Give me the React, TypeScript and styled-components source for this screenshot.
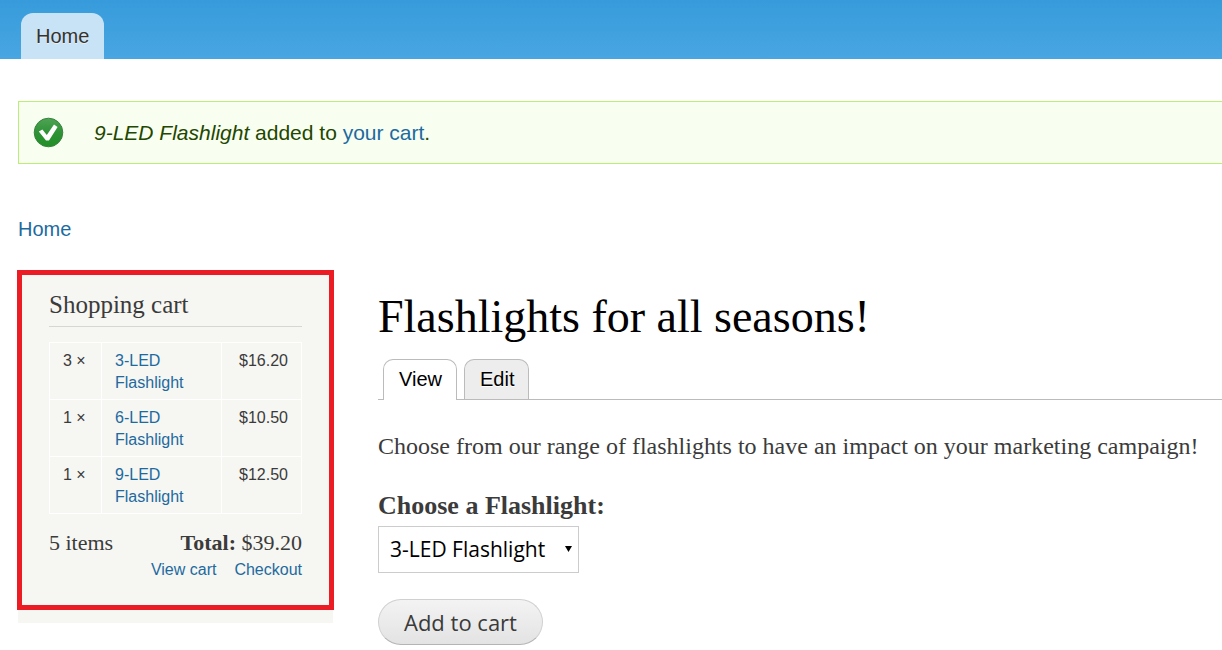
import React from "react";
import styled, { createGlobalStyle } from "styled-components";

const serif = `Georgia, "Liberation Serif", "Times New Roman", serif`;
const sans = `"Liberation Sans", Arial, Helvetica, sans-serif`;
const controls = `"Lucida Grande", "Open Sans", "Noto Sans", sans-serif`;

const GlobalStyle = createGlobalStyle`
  *, *::before, *::after { box-sizing: border-box; }
  body {
    margin: 0;
    background: #fff;
    color: #3b3b3b;
    font-family: ${serif};
    font-size: 24px;
    line-height: 32px;
  }
  h1, h2, p { margin: 0; font-weight: 400; }
`;

const Link = styled.a`
  color: #1d6a9f;
  font-family: ${sans};
  text-decoration: none;
  &:hover { text-decoration: underline; }
`;

const Header = styled.header`
  display: flex;
  align-items: flex-end;
  height: 59px;
  padding: 0 21px;
  background: linear-gradient(#379bdb, #48a6e2);
`;

const MenuTab = styled.a`
  padding: 7px 15px;
  border-radius: 12px 12px 0 0;
  background: #c7e3f5;
  color: #333;
  font: 20px/32px ${sans};
  text-shadow: 0 1px #eee;
  text-decoration: none;
`;

const Page = styled.div`
  padding: 42px 0 5px 18px;
`;

const Message = styled.div`
  display: flex;
  align-items: center;
  gap: 30px;
  min-height: 63px;
  padding: 0 14px;
  border: 1px solid #be7;
  border-right: 0;
  background: #f8fff0;
  color: #234600;
  font: 21px/32px ${sans};
`;

const Breadcrumb = styled.nav`
  padding: 49px 0 25px;
  font-size: 20px;
`;

const Columns = styled.div`
  display: flex;
  align-items: flex-start;
  gap: 45px;
`;

const Sidebar = styled.aside`
  position: relative;
  flex: 0 0 315px;
  padding: 19px 31px 40px;
  background: #f6f6f2;
`;

const Highlight = styled.div`
  position: absolute;
  inset: 0 -1px 13px;
  border: 5px solid #ec1c24;
  pointer-events: none;
`;

const BlockTitle = styled.h2`
  margin-bottom: 15px;
  padding-bottom: 5px;
  border-bottom: 1px solid #d6d6d6;
  font-size: 25px;
  line-height: 32px;
`;

const CartTable = styled.table`
  width: 100%;
  border-collapse: collapse;
  font: 16px/22px ${sans};
`;

const Cell = styled.td<{ $width?: number; $right?: boolean }>`
  width: ${(p) => (p.$width ? `${p.$width}px` : "auto")};
  padding: 7px 13px 5px;
  border: 1px solid #fff;
  text-align: ${(p) => (p.$right ? "right" : "left")};
  vertical-align: top;
`;

const Summary = styled.div`
  display: flex;
  justify-content: space-between;
  margin-top: 15px;
  font-size: 22px;
  line-height: 28px;
`;

const CartLinks = styled.div`
  display: flex;
  justify-content: flex-end;
  gap: 18px;
  font-size: 16px;
  line-height: 26px;
`;

const Main = styled.main`
  flex: 1;
  min-width: 0;
  padding-top: 20px;
`;

const Title = styled.h1`
  color: #000;
  font-size: 46px;
  line-height: 54px;
`;

const Tabs = styled.nav`
  display: flex;
  gap: 7px;
  margin-top: 15px;
  padding-left: 5px;
  border-bottom: 1px solid #bbb;
`;

const Tab = styled.a<{ $active?: boolean }>`
  margin-bottom: ${(p) => (p.$active ? "-1px" : "0")};
  padding: 3px 14px ${(p) => (p.$active ? "5px" : "4px")} 15px;
  border: 1px solid #bbb;
  border-bottom: 0;
  border-radius: 10px 10px 0 0;
  background: ${(p) => (p.$active ? "#fff" : "#ededed")};
  color: #000;
  font: 20px/32px ${sans};
  text-shadow: 0 1px #fff;
  text-decoration: none;
`;

const Intro = styled.p`
  margin-top: 30px;
  white-space: nowrap;
`;

const Form = styled.form`
  display: flex;
  flex-direction: column;
  align-items: flex-start;
  margin-top: 28px;
`;

const Label = styled.label`
  font-size: 26px;
  font-weight: 700;
`;

const SelectBox = styled.div`
  position: relative;
  margin-top: 4px;
`;

const Select = styled.select`
  appearance: none;
  width: 201px;
  height: 47px;
  padding: 0 11px 2px;
  border: 1px solid #ccc;
  border-radius: 0;
  background: #fff;
  color: #000;
  font: 21px/32px ${controls};
`;

const Arrow = styled.svg`
  position: absolute;
  top: 20px;
  right: 7px;
  pointer-events: none;
`;

const Submit = styled.button`
  height: 46px;
  margin-top: 26px;
  padding: 0 25px 1px;
  border: 1px solid #d0d0d0;
  border-bottom-color: #b4b4b4;
  border-radius: 23px;
  background: linear-gradient(#f3f3f3, #e3e3e3);
  color: #3a3a3a;
  font: 22px/32px ${controls};
`;

const CheckIcon = () => (
  <svg width="31" height="31" viewBox="0 0 31 31" aria-hidden="true">
    <defs>
      <linearGradient id="disc" x1="0" y1="0" x2="0" y2="1">
        <stop offset="0" stopColor="#4fa455" />
        <stop offset="0.5" stopColor="#2f9237" />
        <stop offset="1" stopColor="#209026" />
      </linearGradient>
    </defs>
    <circle cx="15.5" cy="15.5" r="14.3" fill="url(#disc)" stroke="#38823d" />
    <path d="M5.8 14.4 9.4 12.6 13.8 18 21 7.6 24.6 10 16 23.4H13z" fill="#fff" />
  </svg>
);

const items = [
  { quantity: 3, name: "3-LED Flashlight", price: "$16.20" },
  { quantity: 1, name: "6-LED Flashlight", price: "$10.50" },
  { quantity: 1, name: "9-LED Flashlight", price: "$12.50" },
];

export default function App() {
  return (
    <>
      <GlobalStyle />
      <Header>
        <MenuTab href="#home">Home</MenuTab>
      </Header>
      <Page>
        <Message role="status">
          <CheckIcon />
          <p>
            <em>9-LED Flashlight</em> added to <Link href="#cart">your cart</Link>.
          </p>
        </Message>
        <Breadcrumb>
          <Link href="#home">Home</Link>
        </Breadcrumb>
        <Columns>
          <Sidebar>
            <BlockTitle>Shopping cart</BlockTitle>
            <CartTable>
              <tbody>
                {items.map((item) => (
                  <tr key={item.name}>
                    <Cell $width={52}>{item.quantity} ×</Cell>
                    <Cell>
                      <Link href="#product">{item.name}</Link>
                    </Cell>
                    <Cell $width={80} $right>{item.price}</Cell>
                  </tr>
                ))}
              </tbody>
            </CartTable>
            <Summary>
              <span>5 items</span>
              <span>
                <strong>Total:</strong> $39.20
              </span>
            </Summary>
            <CartLinks>
              <Link href="#cart">View cart</Link>
              <Link href="#checkout">Checkout</Link>
            </CartLinks>
            <Highlight />
          </Sidebar>
          <Main>
            <Title>Flashlights for all seasons!</Title>
            <Tabs>
              <Tab href="#view" $active>View</Tab>
              <Tab href="#edit">Edit</Tab>
            </Tabs>
            <Intro>
              Choose from our range of flashlights to have an impact on your marketing campaign!
            </Intro>
            <Form onSubmit={(event) => event.preventDefault()}>
              <Label htmlFor="flashlight">Choose a Flashlight:</Label>
              <SelectBox>
                <Select id="flashlight">
                  {items.map((item) => (
                    <option key={item.name}>{item.name}</option>
                  ))}
                </Select>
                <Arrow width="7" height="6" viewBox="0 0 7 6" aria-hidden="true">
                  <path d="M0 0h7L3.5 6z" />
                </Arrow>
              </SelectBox>
              <Submit type="submit">Add to cart</Submit>
            </Form>
          </Main>
        </Columns>
      </Page>
    </>
  );
}
